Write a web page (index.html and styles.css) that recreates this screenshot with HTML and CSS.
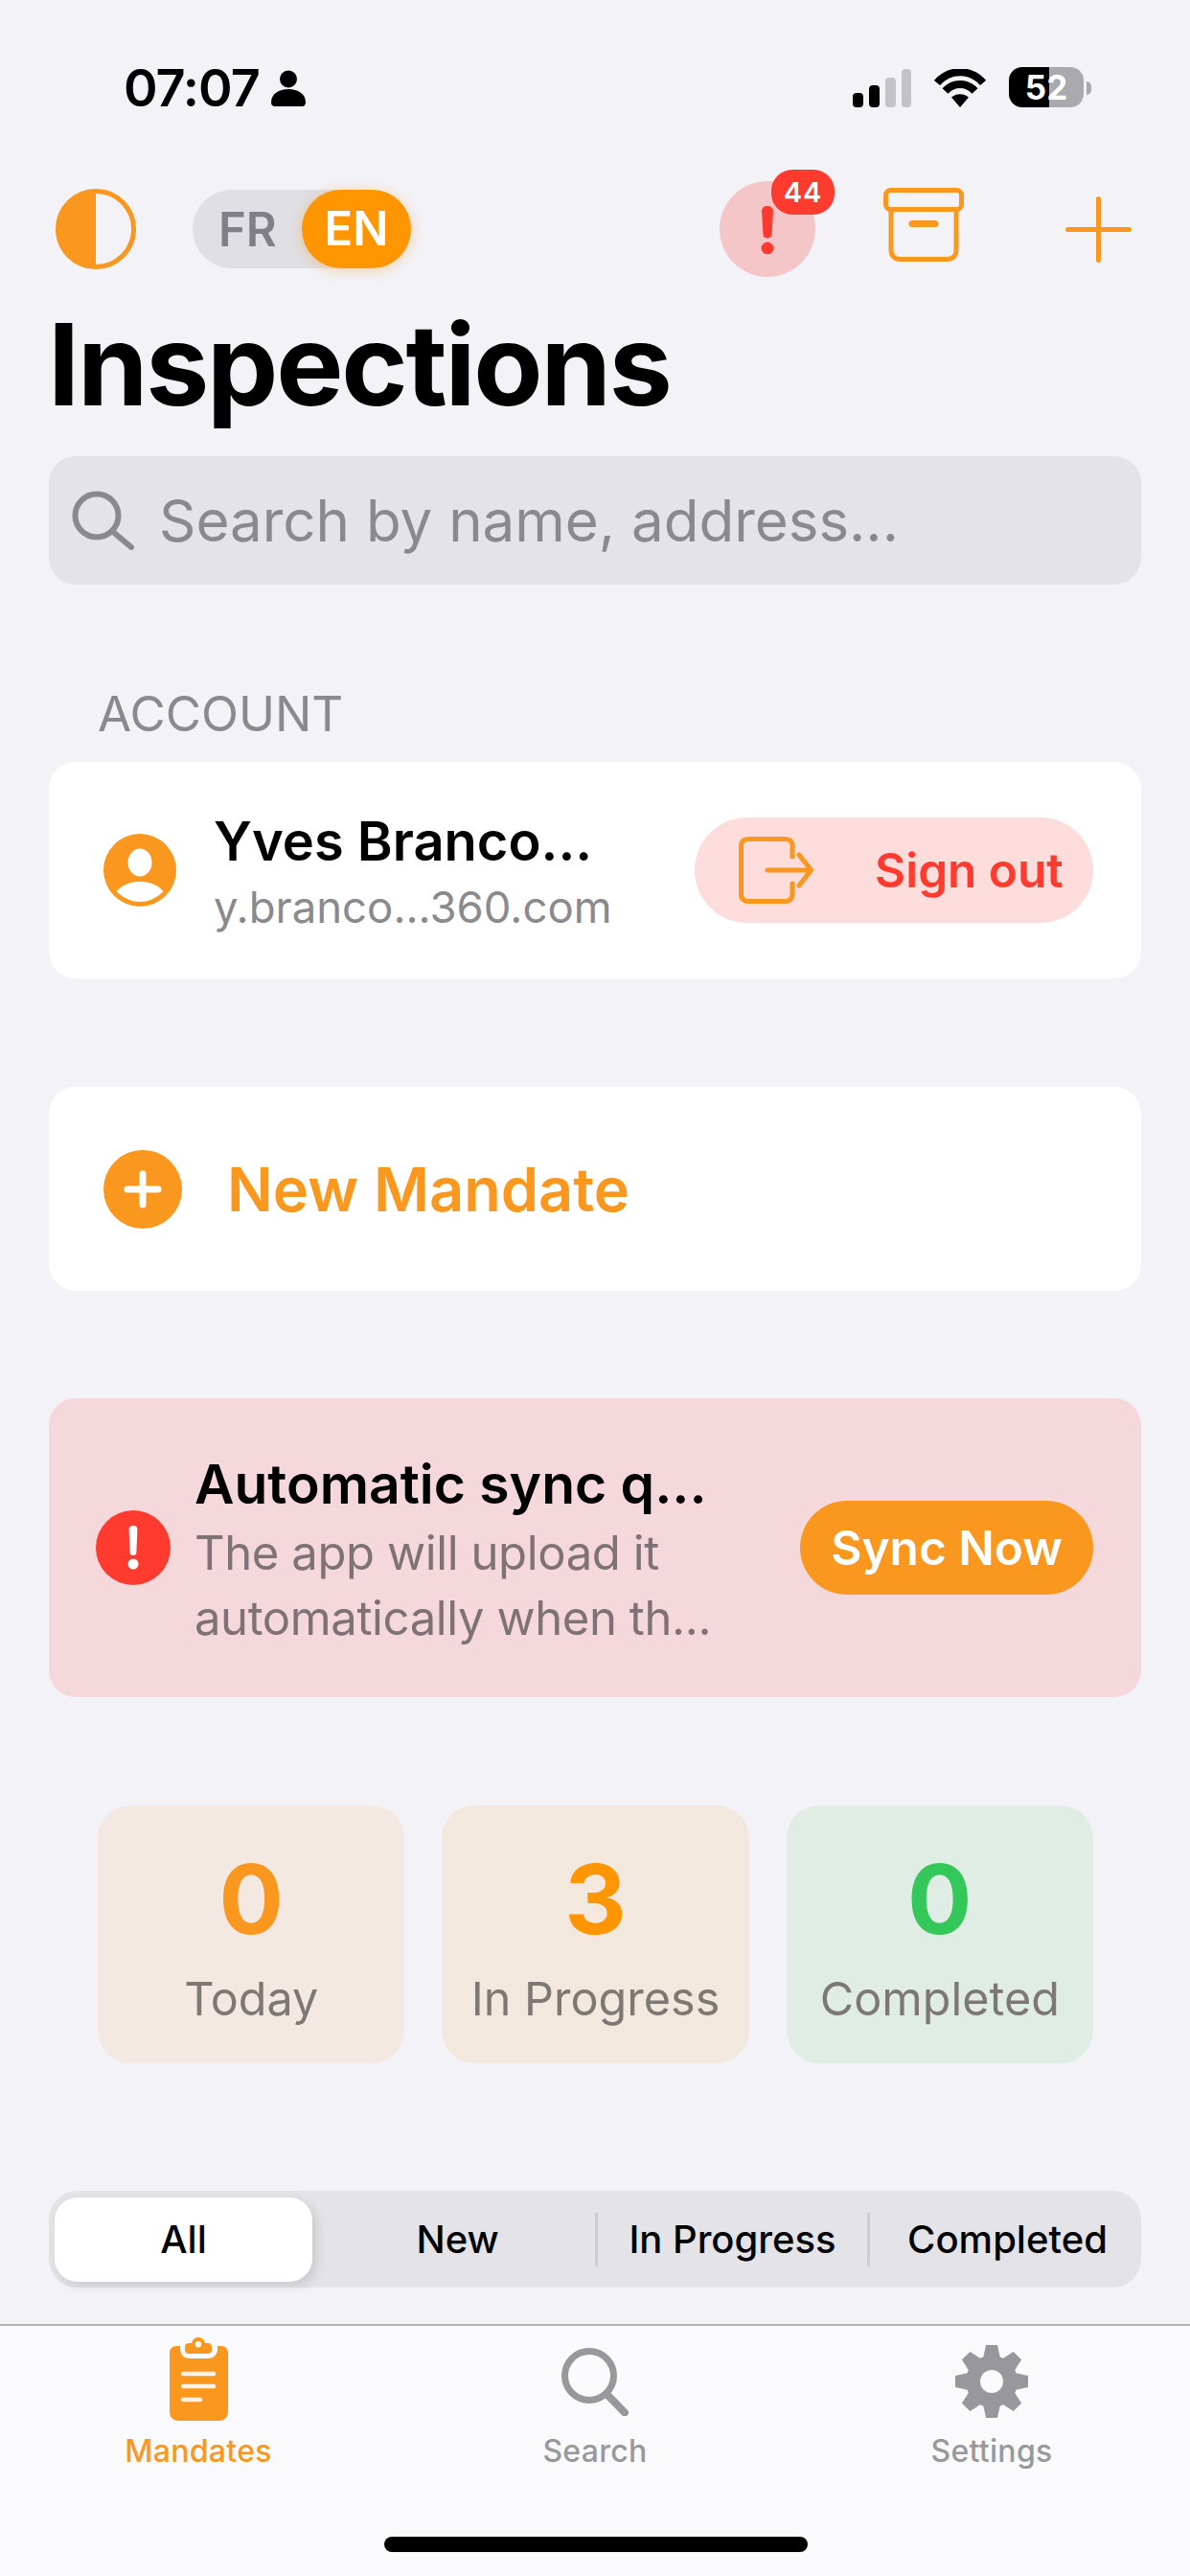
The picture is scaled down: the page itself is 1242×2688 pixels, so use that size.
FILE: index.html
```html
<!DOCTYPE html>
<html lang="en">
<head>
    <meta charset="UTF-8">
    <meta name="viewport" content="width=device-width, initial-scale=1.0">
    <title>Inspections</title>
    <link rel="stylesheet" href="styles.css">
</head>
<body>
    <!-- Status bar -->
    <div class="status-bar">
        <div class="status-left">
            <span class="clock">07:07</span>
            <svg class="person-icon" viewBox="0 0 36 38"><circle cx="18" cy="9.500" r="9"/><path d="M0 34c0-9 8-14 18-14s18 5 18 14c0 2.500-1.500 4-4 4H4c-2.500 0-4-1.500-4-4z"/></svg>
        </div>
        <div class="status-right">
            <svg class="signal-icon" viewBox="0 0 61 40">
                <rect x="0" y="25" width="11" height="15" rx="4"/>
                <rect x="17" y="17" width="11" height="23" rx="4"/>
                <rect class="off" x="34" y="9" width="11" height="31" rx="4"/>
                <rect class="off" x="51" y="0" width="10" height="40" rx="4"/>
            </svg>
            <svg class="wifi-icon" viewBox="0 0 54 40">
                <path class="arc" d="M3 14.500C16-.5 38-.5 51 14.500"/>
                <path class="arc" d="M11.500 23C20 13.500 34 13.500 42.500 23"/>
                <path d="M18 29.500C23 25 31 25 36 29.500L27 40z"/>
            </svg>
            <div class="battery">52</div>
        </div>
    </div>

    <!-- Toolbar -->
    <div class="toolbar">
        <svg class="theme-icon" viewBox="0 0 84 84"><circle cx="42" cy="42" r="39.500" fill="none" stroke="#f9971e" stroke-width="5"/><path d="M42 2a40 40 0 0 0 0 80z" fill="#f9971e"/></svg>
        <div class="lang-toggle">
            <span class="lang-option">FR</span>
            <span class="lang-option active">EN</span>
        </div>
        <div class="toolbar-actions">
            <div class="alert-button">
                <svg class="alert-mark" viewBox="0 0 14 50"><path d="M7 0c3.500 0 6 2 6 5.500L11.500 30c-.2 2.500-2 3.500-4.500 3.500S2.700 32.500 2.500 30L1 5.500C1 2 3.500 0 7 0z"/><circle cx="7" cy="44" r="6.500"/></svg>
                <span class="badge">44</span>
            </div>
            <svg class="archive-icon" viewBox="0 0 84 77"><rect x="2.500" y="2.500" width="79" height="20" rx="5"/><path d="M8 23v42c0 6 4 9.500 9.500 9.500h49c5.500 0 9.500-3.500 9.500-9.500V23"/><path d="M30 37.500h24" stroke-width="7"/></svg>
            <svg class="plus-icon" viewBox="0 0 69 69"><path d="M34.500 2.500v64M2.500 34.500h64"/></svg>
        </div>
    </div>

    <h1 class="page-title">Inspections</h1>

    <div class="search-box">
        <svg class="search-icon" viewBox="0 0 66 62"><circle cx="26" cy="26" r="22.500"/><path d="M43 43l19 16"/></svg>
        <span>Search by name, address...</span>
    </div>

    <!-- Account -->
    <div class="section-label">ACCOUNT</div>
    <div class="card account-card">
        <svg class="user-icon" viewBox="0 0 76 76">
            <defs><clipPath id="userClip"><circle cx="38" cy="38" r="33"/></clipPath></defs>
            <circle cx="38" cy="38" r="38" fill="#f9971e"/>
            <ellipse cx="38" cy="30" rx="12.500" ry="14.500" fill="#fff"/>
            <ellipse cx="38" cy="68" rx="27" ry="18" fill="#fff" clip-path="url(#userClip)"/>
        </svg>
        <div class="account-text">
            <div class="account-name">Yves Branco...</div>
            <div class="account-mail">y.branco...360.com</div>
        </div>
        <div class="sign-out">
            <svg class="door-icon" viewBox="0 0 78 70"><path d="M56 21V10c0-5-3-7.500-7.500-7.500H10C5.500 2.500 2.500 5 2.500 10v50c0 5 3 7.500 7.500 7.500h38.500c4.500 0 7.500-2.500 7.500-7.500V49"/><path d="M30 35h45M63 19l12.500 16L63 51"/></svg>
            <span>Sign out</span>
        </div>
    </div>

    <div class="card mandate-card">
        <svg class="add-icon" viewBox="0 0 82 82"><circle cx="41" cy="41" r="41" fill="#f9971e"/><path d="M41 25v32M25 41h32" stroke="#fff" stroke-width="7" stroke-linecap="round"/></svg>
        <span>New Mandate</span>
    </div>

    <!-- Sync warning -->
    <div class="sync-card">
        <svg class="sync-icon" viewBox="0 0 78 78"><circle cx="39" cy="39" r="39" fill="#ff3b30"/><path d="M39 16c2.800 0 4.500 1.500 4.400 4l-1 24c-.1 2-1.400 3-3.400 3s-3.300-1-3.400-3l-1-24c-.1-2.500 1.600-4 4.400-4z" fill="#fff"/><circle cx="39" cy="56" r="5.500" fill="#fff"/></svg>
        <div class="sync-text">
            <div class="sync-title">Automatic sync q...</div>
            <div class="sync-desc">The app will upload it<br>automatically when th...</div>
        </div>
        <div class="sync-button">Sync Now</div>
    </div>

    <!-- Stats -->
    <div class="stats">
        <div class="stat stat-today"><div class="stat-num">0</div><div class="stat-label">Today</div></div>
        <div class="stat stat-progress"><div class="stat-num">3</div><div class="stat-label">In Progress</div></div>
        <div class="stat stat-done"><div class="stat-num">0</div><div class="stat-label">Completed</div></div>
    </div>

    <!-- Filter -->
    <div class="segments">
        <div class="segment selected">All</div>
        <div class="segment seg-new">New</div>
        <div class="segment seg-progress">In Progress</div>
        <div class="segment seg-done">Completed</div>
    </div>

    <!-- Tab bar -->
    <div class="tab-bar">
        <div class="tabs">
            <div class="tab active">
                <svg class="tab-clip" viewBox="0 0 61 87">
                    <path d="M7 9h4v3c0 6 4 10 10 10h19c6 0 10-4 10-10V9h4c4 0 7 3 7 7v62c0 5-4 9-9 9H9c-5 0-9-4-9-9V16c0-4 3-7 7-7z" fill="#f9971e"/>
                    <path fill-rule="evenodd" d="M20 6h3c1-4 4-6 7-6s6 2 7 6h3c2.500 0 4 1.500 4 4v3c0 2.500-1.500 4-4 4H20c-2.500 0-4-1.500-4-4v-3c0-2.500 1.500-4 4-4zM30 4a3.200 3.200 0 1 0 0 6.400A3.200 3.200 0 0 0 30 4z" fill="#f9971e"/>
                    <path d="M14 38h32M14 51h32M14 65h18" stroke="#fdf3e6" stroke-width="4.500" stroke-linecap="round"/>
                </svg>
                <span>Mandates</span>
            </div>
            <div class="tab">
                <svg class="tab-search" viewBox="0 0 70 71"><circle cx="29" cy="29" r="25.500"/><path d="M47 48l19 19.500" stroke-width="8" stroke-linecap="round"/></svg>
                <span>Search</span>
            </div>
            <div class="tab">
                <svg class="tab-gear" viewBox="0 0 76 76">
                    <g fill="#98989c">
                        <path id="tooth" d="M32 0h12l3 14H29z"/>
                        <use href="#tooth" transform="rotate(45 38 38)"/>
                        <use href="#tooth" transform="rotate(90 38 38)"/>
                        <use href="#tooth" transform="rotate(135 38 38)"/>
                        <use href="#tooth" transform="rotate(180 38 38)"/>
                        <use href="#tooth" transform="rotate(225 38 38)"/>
                        <use href="#tooth" transform="rotate(270 38 38)"/>
                        <use href="#tooth" transform="rotate(315 38 38)"/>
                        <circle cx="38" cy="38" r="27"/>
                    </g>
                    <circle cx="38" cy="38" r="12" fill="#fafafc"/>
                </svg>
                <span>Settings</span>
            </div>
        </div>
        <div class="home-indicator"></div>
    </div>
</body>
</html>
```

FILE: styles.css
```css
/* --- General Setup --- */
:root {
    --orange: #f9971e;
    --red: #ff3b30;
    --gray-text: #8a8a8e;
    --fill: #e3e3e8;
}

* {
    box-sizing: border-box;
}

html, body {
    margin: 0;
    height: 2688px;
    overflow: hidden;
}

body {
    display: flex;
    flex-direction: column;
    background-color: #f2f2f7;
    font-family: "Inter", "Liberation Sans", sans-serif;
    color: #000;
}

svg {
    display: block;
    flex-shrink: 0;
}

/* --- Status bar --- */
.status-bar {
    height: 183px;
    padding: 70px 111px 0 129px;
    display: flex;
    justify-content: space-between;
    align-items: flex-start;
}

.status-left {
    display: flex;
    align-items: center;
    gap: 12px;
    height: 44px;
}

.clock {
    font-size: 54px;
    font-weight: 600;
    letter-spacing: -1px;
    line-height: 44px;
}

.person-icon {
    width: 36px;
    height: 38px;
}

.status-right {
    display: flex;
    align-items: flex-start;
}

.signal-icon {
    width: 61px;
    height: 40px;
    margin-top: 2px;
}

.signal-icon .off {
    fill: #c2c2c7;
}

.wifi-icon {
    width: 54px;
    height: 40px;
    margin: 2px 0 0 24px;
}

.wifi-icon .arc {
    fill: none;
    stroke: #000;
    stroke-width: 8;
}

.battery {
    position: relative;
    width: 78px;
    height: 42px;
    margin-left: 24px;
    border-radius: 14px;
    background: linear-gradient(90deg, #000 54%, #a9a9ae 54%);
    color: #fff;
    font-size: 35px;
    font-weight: 700;
    line-height: 42px;
    text-align: center;
}

.battery::after {
    content: "";
    position: absolute;
    right: -8px;
    top: 15px;
    width: 5px;
    height: 14px;
    border-radius: 0 7px 7px 0;
    background-color: #a9a9ae;
}

/* --- Toolbar --- */
.toolbar {
    height: 112px;
    padding: 0 61px 0 58px;
    display: flex;
    align-items: center;
}

.theme-icon {
    width: 84px;
    height: 84px;
}

.lang-toggle {
    display: flex;
    justify-content: space-between;
    align-items: center;
    width: 228px;
    height: 82px;
    margin-left: 59px;
    padding-left: 27px;
    border-radius: 41px;
    background-color: #dfdfe4;
}

.lang-option {
    font-size: 49px;
    font-weight: 600;
    color: #7f7f85;
}

.lang-option.active {
    width: 114px;
    height: 82px;
    border-radius: 41px;
    background-color: #ff9500;
    color: #fff;
    line-height: 82px;
    text-align: center;
    box-shadow: 0 2px 14px rgba(255, 149, 0, 0.35);
}

.toolbar-actions {
    margin-left: auto;
    display: flex;
    align-items: center;
}

.alert-button {
    position: relative;
    display: flex;
    justify-content: center;
    align-items: center;
    width: 100px;
    height: 100px;
    border-radius: 50%;
    background-color: #f5c6c7;
}

.alert-mark {
    width: 14px;
    height: 50px;
    margin-top: 1px;
    fill: var(--red);
}

.badge {
    position: absolute;
    left: 54px;
    top: -12px;
    width: 66px;
    height: 47px;
    border-radius: 22px;
    background-color: var(--red);
    color: #fff;
    font-size: 29px;
    font-weight: 600;
    letter-spacing: 1px;
    line-height: 47px;
    text-align: center;
}

.archive-icon {
    width: 84px;
    height: 77px;
    margin: -9px 0 0 71px;
    fill: none;
    stroke: var(--orange);
    stroke-width: 5;
    stroke-linecap: round;
}

.plus-icon {
    width: 69px;
    height: 69px;
    margin-left: 106px;
    fill: none;
    stroke: var(--orange);
    stroke-width: 5;
    stroke-linecap: round;
}

/* --- Title & Search --- */
.page-title {
    margin: 15px 0 0 50px;
    font-size: 118px;
    font-weight: 700;
    letter-spacing: -2.200px;
    line-height: 140px;
}

.search-box {
    display: flex;
    align-items: center;
    gap: 25px;
    height: 134px;
    margin: 26px 51px 0;
    padding-left: 24px;
    border-radius: 28px;
    background-color: var(--fill);
    color: var(--gray-text);
    font-size: 60px;
}

.search-icon {
    width: 66px;
    height: 62px;
    fill: none;
    stroke: var(--gray-text);
    stroke-width: 6;
    stroke-linecap: round;
}

/* --- Cards --- */
.section-label {
    margin: 105px 0 0 102px;
    font-size: 51px;
    line-height: 60px;
    color: var(--gray-text);
}

.card {
    display: flex;
    align-items: center;
    margin: 0 51px;
    border-radius: 28px;
    background-color: #fff;
}

.account-card {
    height: 226px;
    margin-top: 20px;
    padding: 0 50px 0 57px;
}

.user-icon {
    width: 76px;
    height: 76px;
}

.account-text {
    margin: 2px 0 0 39px;
}

.account-name {
    font-size: 56px;
    font-weight: 600;
    line-height: 72px;
}

.account-mail {
    margin-top: 4px;
    font-size: 45.500px;
    line-height: 58px;
    color: var(--gray-text);
}

.sign-out {
    display: flex;
    align-items: center;
    gap: 64px;
    width: 416px;
    height: 110px;
    margin-left: auto;
    padding-left: 46px;
    border-radius: 55px;
    background-color: #fddcdc;
    color: var(--red);
    font-size: 49.500px;
    font-weight: 600;
}

.door-icon {
    width: 78px;
    height: 70px;
    fill: none;
    stroke: var(--orange);
    stroke-width: 5;
    stroke-linecap: round;
    stroke-linejoin: round;
}

.mandate-card {
    gap: 47px;
    height: 213px;
    margin-top: 113px;
    padding-left: 57px;
    color: var(--orange);
    font-size: 63px;
    font-weight: 600;
}

.add-icon {
    width: 82px;
    height: 82px;
}

/* --- Sync warning --- */
.sync-card {
    display: flex;
    align-items: center;
    height: 312px;
    margin: 112px 51px 0;
    padding: 0 50px 0 49px;
    border-radius: 28px;
    background-color: #f5d8dc;
}

.sync-icon {
    width: 78px;
    height: 78px;
}

.sync-text {
    margin: 6px 0 0 25px;
}

.sync-title {
    font-size: 57px;
    font-weight: 600;
    line-height: 72px;
}

.sync-desc {
    margin-top: 2px;
    font-size: 49px;
    letter-spacing: -0.400px;
    line-height: 68px;
    color: #7e7276;
}

.sync-button {
    width: 306px;
    height: 98px;
    margin-left: auto;
    border-radius: 49px;
    background-color: var(--orange);
    color: #fff;
    font-size: 49.500px;
    font-weight: 600;
    line-height: 98px;
    text-align: center;
}

/* --- Stats --- */
.stats {
    display: grid;
    grid-template-columns: repeat(3, 1fr);
    gap: 39px;
    margin: 113px 101px 0 102px;
}

.stat {
    height: 269px;
    padding-top: 42px;
    border-radius: 34px;
    text-align: center;
}

.stat-today {
    background-color: #f3e8e2;
}

.stat-progress {
    background-color: #f3e8de;
}

.stat-done {
    background-color: #dfede5;
}

.stat-num {
    font-size: 100px;
    font-weight: 700;
    line-height: 112px;
}

.stat-today .stat-num {
    color: var(--orange);
}

.stat-progress .stat-num {
    color: #ff9500;
}

.stat-done .stat-num {
    color: #34c759;
}

.stat-label {
    margin-top: 18px;
    font-size: 48.500px;
    line-height: 60px;
    color: #7d7873;
}

/* --- Filter --- */
.segments {
    display: flex;
    align-items: center;
    height: 101px;
    margin: 133px 51px 0;
    padding: 0 6px;
    border-radius: 30px;
    background-color: var(--fill);
    font-size: 40px;
    font-weight: 500;
}

.segment {
    text-align: center;
    line-height: 88px;
}

.segment.selected {
    width: 269px;
    border-radius: 24px;
    background-color: #fff;
    box-shadow: 4px 4px 12px rgba(0, 0, 0, 0.12);
}

.seg-new {
    width: 295px;
    padding-left: 8px;
}

.seg-progress,
.seg-done {
    height: 56px;
    line-height: 56px;
    border-left: 3px solid #cdcdd2;
}

.seg-progress {
    width: 284px;
}

.seg-done {
    flex: 1;
    padding-left: 10px;
}

/* --- Tab bar --- */
.tab-bar {
    position: relative;
    margin-top: auto;
    height: 263px;
    border-top: 2px solid #b2b2b5;
    background-color: #fafafc;
}

.tabs {
    display: grid;
    grid-template-columns: 414px 414px 414px;
}

.tab {
    display: flex;
    flex-direction: column;
    align-items: center;
    height: 146px;
    color: #98989c;
    font-size: 32px;
    font-weight: 500;
    letter-spacing: 0.300px;
}

.tab span {
    position: absolute;
    top: 109px;
    line-height: 44px;
}

.tab.active {
    color: var(--orange);
}

.tab-clip {
    width: 61px;
    height: 87px;
    margin-top: 12px;
}

.tab-search {
    width: 70px;
    height: 71px;
    margin-top: 23px;
    fill: none;
    stroke: #98989c;
    stroke-width: 7;
}

.tab-gear {
    width: 76px;
    height: 76px;
    margin-top: 20px;
}

.home-indicator {
    position: absolute;
    left: 401px;
    top: 220px;
    width: 442px;
    height: 16px;
    border-radius: 8px;
    background-color: #000;
}
```
